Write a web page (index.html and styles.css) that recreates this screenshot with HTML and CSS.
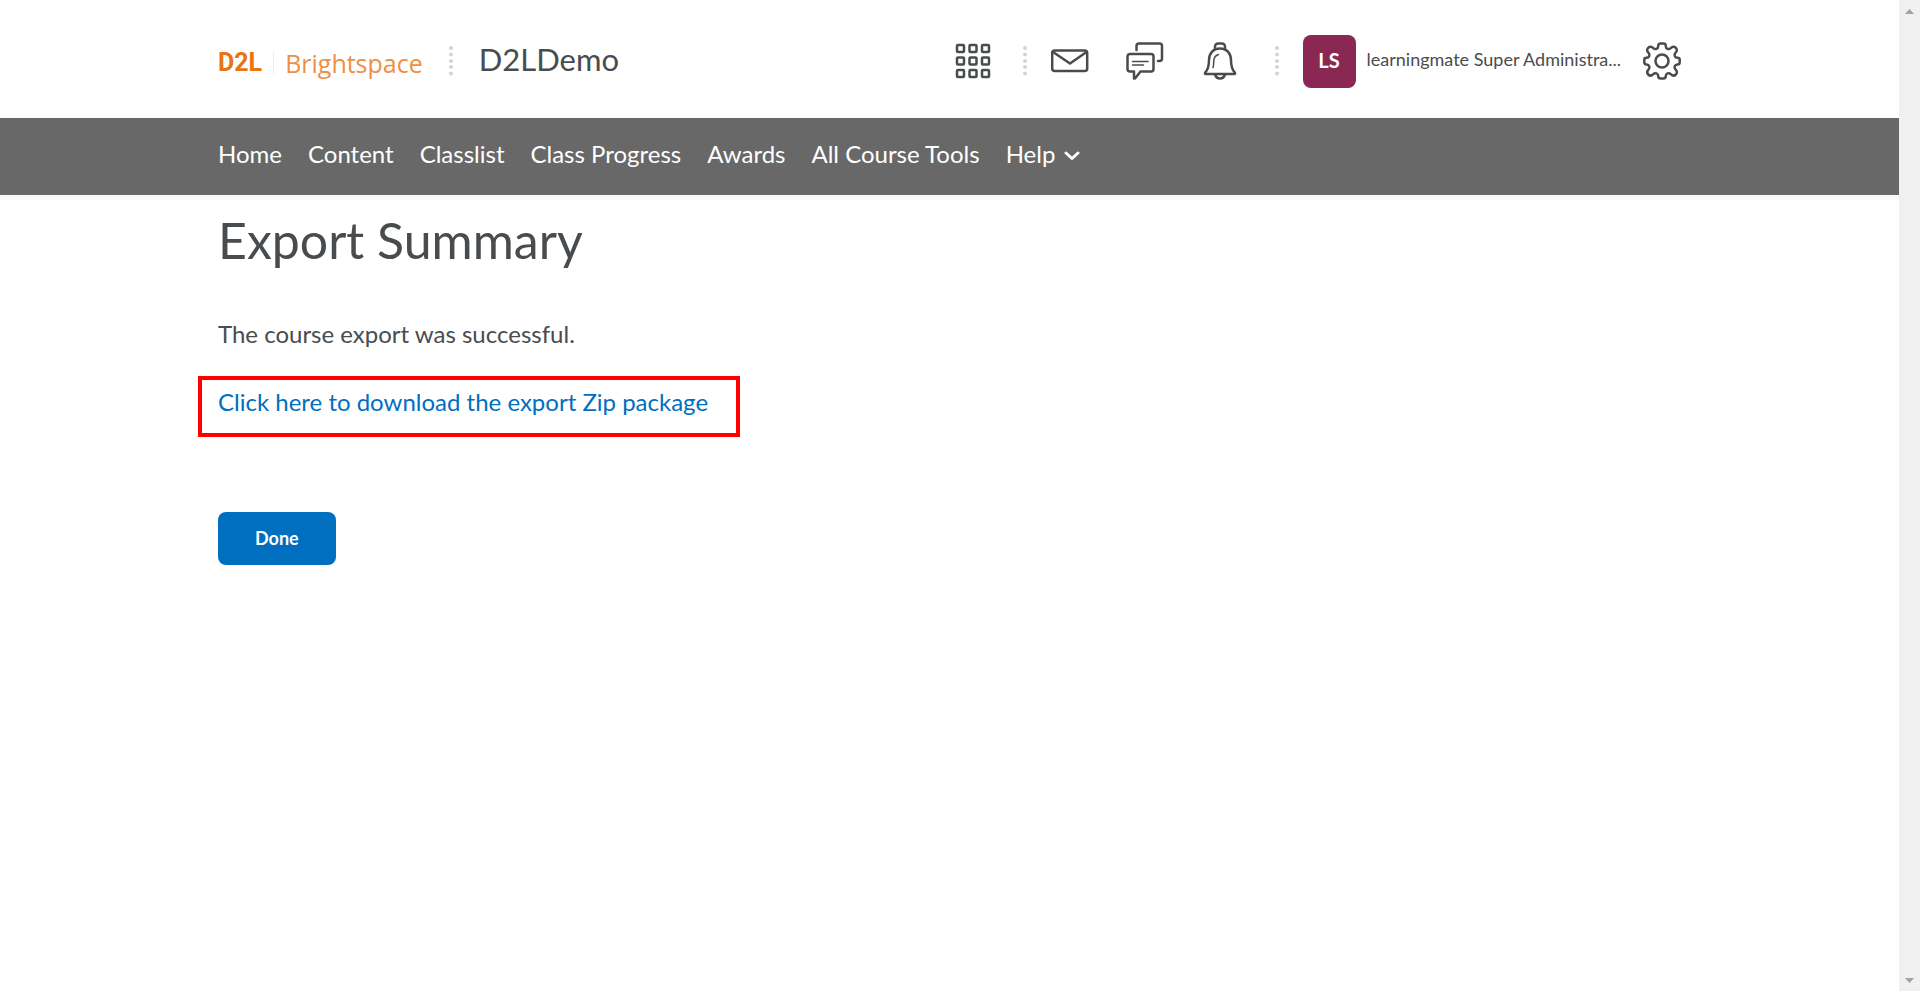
FILE: index.html
```html
<!DOCTYPE html>
<html lang="en">
<head>
    <meta charset="UTF-8">
    <title>Export Summary - D2LDemo</title>
    <link rel="stylesheet" href="styles.css">
</head>
<body>

    <div class="page">
        <header class="header">
            <div class="wrap header-row">
                <a class="logo" href="#">
                    <span class="logo-d2l">D2L</span>
                    <span class="logo-line"></span>
                    <span class="logo-name">Brightspace</span>
                </a>
                <svg class="dots dots-course" viewBox="0 0 4 30"><circle cx="2" cy="2" r="2"/><circle cx="2" cy="8.5" r="2"/><circle cx="2" cy="15" r="2"/><circle cx="2" cy="21" r="2"/><circle cx="2" cy="27.5" r="2"/></svg>
                <a class="course" href="#">D2LDemo</a>

                <div class="tools">
                    <button type="button" class="icon" aria-label="Select a course">
                        <svg viewBox="0 0 38 38">
                            <rect x="3" y="3" width="7" height="7" rx="1"/><rect x="15.5" y="3" width="7" height="7" rx="1"/><rect x="28" y="3" width="7" height="7" rx="1"/>
                            <rect x="3" y="15.5" width="7" height="7" rx="1"/><rect x="15.5" y="15.5" width="7" height="7" rx="1"/><rect x="28" y="15.5" width="7" height="7" rx="1"/>
                            <rect x="3" y="28" width="7" height="7" rx="1"/><rect x="15.5" y="28" width="7" height="7" rx="1"/><rect x="28" y="28" width="7" height="7" rx="1"/>
                        </svg>
                    </button>
                    <svg class="dots" viewBox="0 0 4 30"><circle cx="2" cy="2" r="2"/><circle cx="2" cy="8.5" r="2"/><circle cx="2" cy="15" r="2"/><circle cx="2" cy="21" r="2"/><circle cx="2" cy="27.5" r="2"/></svg>
                    <div class="alerts">
                        <button type="button" class="icon" aria-label="Messages">
                            <svg viewBox="0 0 38 38">
                                <rect x="1.2" y="8.5" width="35" height="20.5" rx="2.5"/>
                                <path d="M2 10l17 11.500L35.500 10"/>
                            </svg>
                        </button>
                        <button type="button" class="icon" aria-label="Subscriptions">
                            <svg viewBox="0 0 38 38">
                                <path d="M10.500 8V4a2.500 2.500 0 0 1 2.500-2.500h20.500A2.500 2.500 0 0 1 36 4v12.500a2.500 2.500 0 0 1-2.500 2.500H32"/>
                                <path d="M4 12h21a2.500 2.500 0 0 1 2.500 2.500v12.500a2.500 2.500 0 0 1-2.500 2.500H14.500L9 36.500h-1V29.500H4A2.500 2.500 0 0 1 1.500 27V14.500A2.500 2.500 0 0 1 4 12z"/>
                                <path class="thin" d="M6.500 19.500H22M6.500 23H17.500"/>
                            </svg>
                        </button>
                        <button type="button" class="icon" aria-label="Updates">
                            <svg viewBox="0 0 38 38">
                                <path d="M14 7V4.500a3 3 0 0 1 3-3h4a3 3 0 0 1 3 3V7"/>
                                <path d="M19 6.500c-7 0-11 5-11 11.500 0 7-1 9.500-3.800 12.500-.6.800-.3 1.500.6 1.500h28.400c.9 0 1.200-.7.6-1.500C31 27.500 30 25 30 18c0-6.500-4-11.500-11-11.500z"/>
                                <path d="M14 32.500c.8 2.500 2.500 4 5 4s4.200-1.500 5-4"/>
                                <path class="thin" d="M17.500 12.500c-3.500 1-4.800 4-4.800 7.500 0 2.500-.2 4-.7 5.500"/>
                            </svg>
                        </button>
                    </div>
                    <svg class="dots dots-user" viewBox="0 0 4 30"><circle cx="2" cy="2" r="2"/><circle cx="2" cy="8.5" r="2"/><circle cx="2" cy="15" r="2"/><circle cx="2" cy="21" r="2"/><circle cx="2" cy="27.5" r="2"/></svg>
                    <button type="button" class="user">
                        <span class="avatar">LS</span>
                        <span class="user-name">learningmate Super Administra...</span>
                    </button>
                    <button type="button" class="icon" aria-label="Admin Tools">
                        <svg viewBox="0 0 38 38">
                            <circle cx="19" cy="19" r="6.500"/>
                            <path d="M15.200 4.200Q15.200 1.500 17.500 1.500h3Q22.800 1.500 22.800 4.200c0 2.600 3 3.800 4.900 2 1.900-1.900 3.500-2 5.100-.4s1.500 3.200-.4 5.100c-1.800 1.900-.6 4.900 2 4.900Q36.700 15.800 36.700 17.800v2.400Q36.700 22.500 34.400 22.500c-2.600 0-3.800 3-2 4.900 1.900 1.900 2 3.500.4 5.100s-3.200 1.500-5.100-.4c-1.900-1.800-4.900-.6-4.900 2Q22.800 36.500 20.500 36.500h-3Q15.200 36.500 15.200 34.100c0-2.600-3-3.800-4.900-2-1.900 1.900-3.500 2-5.100.4s-1.500-3.200.4-5.100c1.800-1.900.6-4.900-2-4.900Q1.300 22.500 1.300 20.200v-2.400Q1.300 15.800 3.600 15.800c2.600 0 3.800-3 2-4.900-1.900-1.900-2-3.500-.4-5.100s3.200-1.500 5.100.4c1.900 1.800 4.900.6 4.900-2z"/>
                        </svg>
                    </button>
                </div>
            </div>
        </header>

        <nav class="nav">
            <div class="wrap nav-row">
                <a href="#">Home</a>
                <a href="#">Content</a>
                <a href="#">Classlist</a>
                <a href="#">Class Progress</a>
                <a href="#">Awards</a>
                <a href="#">All Course Tools</a>
                <button type="button" class="nav-menu">Help <svg viewBox="0 0 16 10"><path d="M2 2l6 5.500L14 2"/></svg></button>
            </div>
        </nav>

        <main class="wrap main">
            <h1>Export Summary</h1>
            <p>The course export was successful.</p>
            <a class="download" href="#">Click here to download the export Zip package</a>
            <button type="button" class="done">Done</button>
        </main>
    </div>

    <div class="scrollbar">
        <svg viewBox="0 0 9 5"><path d="M0 5L4.500 0L9 5z"/></svg>
        <svg viewBox="0 0 9 5"><path d="M0 0L4.500 5L9 0z"/></svg>
    </div>

</body>
</html>
```
FILE: styles.css
```css
* {
    box-sizing: border-box;
}

body {
    display: flex;
    min-height: 100vh;
    margin: 0;
    font-family: Lato, "Liberation Sans", sans-serif;
    font-size: 24px;
    color: #494c4e;
    background-color: #fff;
}

a {
    color: inherit;
    text-decoration: none;
}

button {
    padding: 0;
    border: 0;
    background: none;
    font-family: inherit;
    color: inherit;
    cursor: pointer;
}

svg {
    display: block;
}

.page {
    flex: 1;
    min-width: 0;
}

.wrap {
    max-width: 1463px;
    margin: 0 auto;
}

/* Header */

.header-row {
    display: flex;
    align-items: center;
    height: 118px;
    padding-top: 4px;
}

.header-row > *, .tools > * {
    flex-shrink: 0;
}

.logo {
    display: flex;
    align-items: center;
    padding-top: 4px;
    line-height: 28px;
}

.logo-d2l {
    font-family: Roboto, sans-serif;
    font-size: 25px;
    font-weight: bold;
    color: #e87511;
}

.logo-line {
    width: 1px;
    height: 24px;
    margin: 0 11px;
    background-color: #eee;
}

.logo-name {
    font-family: "Open Sans", sans-serif;
    font-size: 25px;
    color: #ef8f43;
}

.dots {
    width: 4px;
    height: 30px;
    fill: #cdd5dc;
}

.dots-course {
    margin: 0 26px;
}

.course {
    padding-bottom: 4px;
    font-size: 31px;
}

.tools {
    display: flex;
    align-items: center;
    margin-left: auto;
}

.tools .dots {
    margin: 0 24px 0 31px;
}

.tools .dots-user {
    margin-left: 36px;
}

.alerts {
    display: flex;
    gap: 37px;
}

.icon svg {
    width: 38px;
    height: 38px;
    fill: none;
    stroke: #494c4e;
    stroke-width: 2.5;
    stroke-linejoin: round;
    stroke-linecap: round;
}

.icon .thin {
    stroke-width: 1.5;
}

.user {
    display: flex;
    align-items: center;
    gap: 11px;
    margin-right: 22px;
    font-size: 18px;
}

.user-name {
    padding-bottom: 4px;
}

.avatar {
    width: 53px;
    padding-bottom: 2px;
    border-radius: 8px;
    background-color: #8a2853;
    color: #fff;
    font-size: 20px;
    font-weight: bold;
    line-height: 51px;
}

/* Navigation */

.nav {
    border-bottom: 5px solid #fbfafb;
    background-color: #686868;
    color: #fff;
}

.nav-row {
    display: flex;
    align-items: center;
    gap: 26px;
    height: 77px;
    padding-bottom: 6px;
}

.nav-menu {
    display: flex;
    align-items: center;
    gap: 9px;
    font-size: 24px;
}

.nav-menu svg {
    width: 16px;
    height: 10px;
    margin-top: 5px;
    fill: none;
    stroke: #fff;
    stroke-width: 3;
    stroke-linecap: round;
    stroke-linejoin: round;
}

/* Content */

.main {
    display: flex;
    flex-direction: column;
    align-items: flex-start;
    padding-top: 8px;
}

h1 {
    margin: 0 0 46px;
    font-size: 50px;
    font-weight: normal;
    line-height: 64px;
}

p {
    margin: 0 0 26px;
    line-height: 32px;
}

.download {
    margin: 0 0 75px -20px;
    padding: 6px 28px 15px 16px;
    border: 4px solid #f00;
    color: #006fbf;
    line-height: 32px;
}

.done {
    padding: 0 37px;
    border-radius: 8px;
    background-color: #006fbf;
    color: #fff;
    font-size: 18px;
    font-weight: bold;
    line-height: 53px;
}

/* Scroll track */

.scrollbar {
    display: flex;
    flex-direction: column;
    justify-content: space-between;
    align-items: center;
    width: 21px;
    padding: 9px 0 8px;
    background-color: #f0f0f0;
}

.scrollbar svg {
    width: 9px;
    height: 5px;
    fill: #a3a3a3;
}
```
